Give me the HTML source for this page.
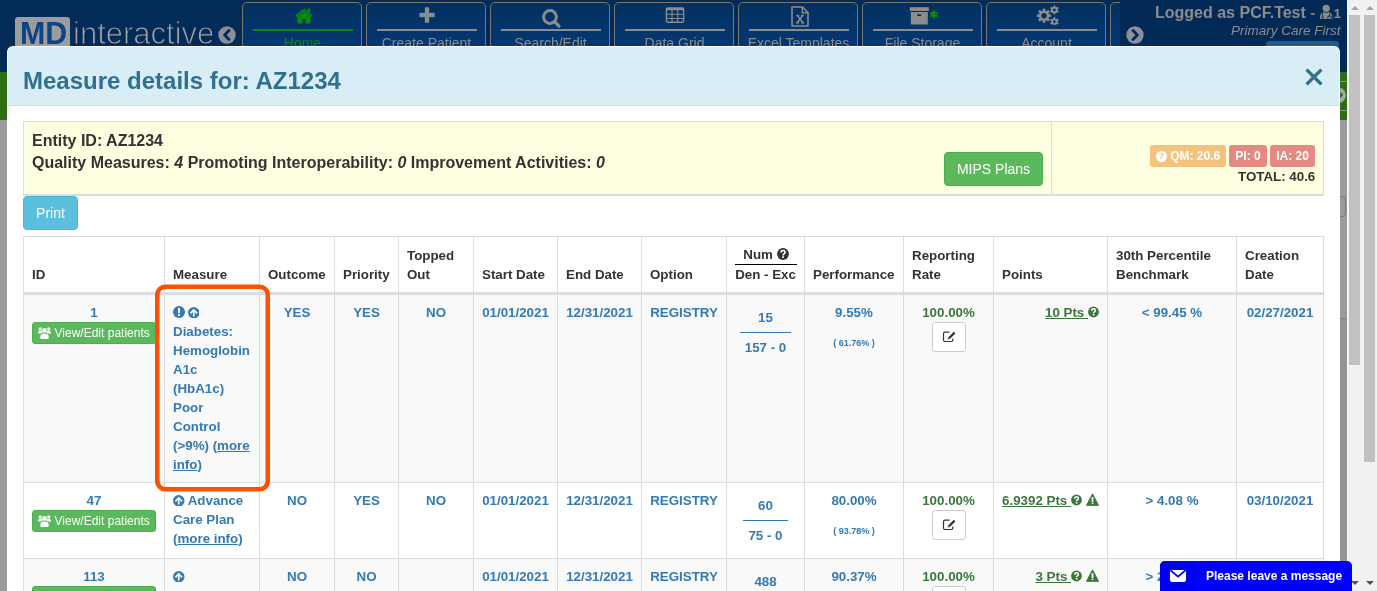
<!DOCTYPE html>
<html><head><meta charset="utf-8">
<style>
*{box-sizing:border-box;margin:0;padding:0}
html,body{width:1377px;height:591px;overflow:hidden;background:#999;font-family:"Liberation Sans",sans-serif;}
#wrap{position:absolute;left:0;top:0;width:1377px;height:591px;overflow:hidden;will-change:transform}
.abs{position:absolute}
#hdr{position:absolute;left:0;top:0;width:1347px;height:72px;background:#032b58}
#green{position:absolute;left:0;top:72px;width:1347px;height:48px;background:#2e6e12}
#gray{position:absolute;left:0;top:120px;width:1347px;height:471px;background:#9b9b9b}
.tab{position:absolute;top:2px;width:120px;height:60px;border:1px solid #7a7670;border-radius:5px;background:linear-gradient(#03305f,#053a7a)}
.tab .ln{position:absolute;left:10px;width:100px;top:26px;height:2px;background:#8c8c8c}
.tab .lb{position:absolute;left:1px;right:0;top:32px;text-align:center;font-size:14px;line-height:16px;color:#8c8c8c}
.tab .ic{position:absolute;left:0;right:0;top:4px;height:18px;text-align:center}
/* modal */
#modal{position:absolute;left:7px;top:46px;width:1333px;height:600px;background:#fff;border-radius:6px;overflow:hidden}
#mhead{position:absolute;left:1px;top:1px;width:1331px;height:59px;background:#d9edf7;border-bottom:1px solid #bce8f1;border-radius:5px 5px 0 0}
#mtitle{position:absolute;left:15px;top:20px;font-size:24px;font-weight:bold;color:#31708f;line-height:28px}
#close{position:absolute;left:1295.5px;top:19.5px}
#entity{position:absolute;left:16px;top:75px;width:1301px;height:75px;background:#fefee0;border:1px solid #ddd;border-bottom-width:2px}
#sb1,#sb2{position:absolute;top:0;width:15px;height:591px;background:#f1f1f1}
#sb1{left:1347px}#sb2{left:1362px}
.thumb{position:absolute;left:2px;width:11px;background:#c1c1c1}
.sbl{position:absolute;left:0;top:0;width:1px;height:591px;background:#fafafa}
.up{position:absolute;left:3.5px;top:6px;width:0;height:0;border-left:4px solid transparent;border-right:4px solid transparent;border-bottom:4px solid #a3a3a3}
.dn{position:absolute;left:3.5px;top:581px;width:0;height:0;border-left:4px solid transparent;border-right:4px solid transparent;border-top:4px solid #505050}
table{position:absolute;left:16px;top:190px;border-collapse:collapse;table-layout:fixed;font-size:13.33px;line-height:19px}
td,th{border:1px solid #ddd;padding:8px;vertical-align:top}
th{vertical-align:bottom;text-align:left;color:#333;border-bottom:3px solid #ddd}
td{color:#337ab7;font-weight:bold;text-align:center}
tr.st td{background:#f9f9f9}
.et{font-size:16px;font-weight:bold;color:#333;white-space:nowrap}
.btn-g{background:#5cb85c;border:1px solid #4cae4c;border-radius:4px;color:#fff;font-size:14px;line-height:32px;text-align:center}
.lbl{height:22px;border-radius:3px;color:#fff;font-size:12px;font-weight:bold;line-height:22px;text-align:center}
td.l{text-align:left}td.r{text-align:right}td.g{color:#3c763d}
.vbtn{display:block;margin:0;height:22px;background:#5cb85c;border:1px solid #4cae4c;border-radius:3px;color:#fff;font-weight:normal;font-size:12px;line-height:20px;white-space:nowrap;text-align:center}
.users{display:inline-block;width:13px;height:12px;vertical-align:-2px}
.nw{display:inline-block;margin-top:5px}
.num{border-bottom:1px solid #337ab7;padding:0 5px 5px}
.den{margin-top:5px;padding:0 5px}
.sm{font-size:9px;line-height:12px;margin-top:15px}
.eb{position:relative;width:34px;height:30px;margin:0 auto;border:1px solid #ccc;border-radius:3px;background:#fff}
.ci{display:inline-block;width:12px;height:12px;vertical-align:-1px}
.ca{width:11.5px;height:11.5px}
.qd,.qg{display:inline-block;width:12px;height:12px;vertical-align:-1px}
.qg{width:11px}
.wi{display:inline-block;width:13px;height:13px;margin-left:4px;vertical-align:-1px}
td.r{white-space:nowrap}
.warn{display:inline-block;width:0;height:0;border-left:7px solid transparent;border-right:7px solid transparent;border-bottom:13px solid #3c763d}
.q{display:inline-block;width:11px;height:11px;border-radius:50%;background:#fff;color:#f4c27c;font-size:9px;line-height:11px;vertical-align:1px}
</style></head><body><div id="wrap">
<div id="hdr"></div>
<div id="green"></div>
<div id="gray"></div>
<div class="abs" style="left:1340px;top:81px;width:7px;height:1px;background:#7f9f7f"></div>
<div class="abs" style="left:1340px;top:110px;width:7px;height:1px;background:#7f9f7f"></div>
<svg class="abs" style="left:1330px;top:87px" width="17" height="17" viewBox="0 0 17 17"><circle cx="8.2" cy="8.3" r="7.7" fill="#a6a6a6"/><path d="M7 3.5L11.4 7.9L7 12.3" stroke="#2e6e12" stroke-width="2.6" fill="none"/></svg>
<div class="abs" style="left:1340px;top:318px;width:7px;height:273px;background:#949494;border-top:1px solid #808080"></div>
<div class="abs" style="left:1336px;top:196px;width:10px;height:21px;border:1px solid #777;border-radius:4px;background:#9b9b9b"></div>

<!-- logo -->
<div class="abs" style="left:15px;top:17px;width:55px;height:35px;background:#9c9c9c;border-radius:3px"></div>
<div class="abs" style="left:19.5px;top:17px;font-size:32px;font-weight:bold;line-height:32px;color:#0b4587;transform:scaleX(0.95);transform-origin:0 0">MD</div>
<div class="abs" style="left:73px;top:18px;font-size:31px;line-height:31px;color:#a3a3a3;-webkit-text-stroke:1px #032b58">interactive</div>
<svg class="abs" style="left:218px;top:26px" width="18" height="18" viewBox="0 0 18 18"><circle cx="9" cy="9" r="8.7" fill="#8a9099"/><path d="M11 4.6L6.6 9L11 13.4" stroke="#032b58" stroke-width="2.8" fill="none" stroke-linecap="round" stroke-linejoin="round"/></svg>

<div class="tab" style="left:242px"><div class="ln" style="background:#0a8a0a"></div><div class="lb" style="color:#0a8a0a">Home</div>
 <svg class="abs" style="left:51.5px;top:5px" width="18" height="16" viewBox="0 0 18 16"><path d="M0.8 8.2L9 1.6L17.2 8.2" stroke="#0a8a0a" stroke-width="1.9" fill="none"/><path d="M12.6 0.6h2.4v5.2l-2.4-1.8z" fill="#0a8a0a"/><path d="M2.4 8.4L9 3.2L15.6 8.4V15.5H10.6V11H7.4V15.5H2.4Z" fill="#0a8a0a"/></svg></div>
<div class="tab" style="left:366px"><div class="ln"></div><div class="lb">Create Patient</div>
 <svg class="abs" style="left:52px;top:4px" width="16" height="16" viewBox="0 0 16 16"><path d="M6 0.5h4v5.5h5.5v4H10v5.5H6V10H0.5V6H6Z" fill="#8c8c8c" stroke="#8c8c8c" stroke-width="0.4" stroke-linejoin="round"/></svg></div>
<div class="tab" style="left:490px"><div class="ln"></div><div class="lb">Search/Edit</div>
 <svg class="abs" style="left:50px;top:4px" width="22" height="22" viewBox="0 0 22 22"><circle cx="9" cy="10" r="6.4" stroke="#8c8c8c" stroke-width="3" fill="none"/><path d="M13.2 14.4L18 19.2" stroke="#8c8c8c" stroke-width="3.2" stroke-linecap="round"/></svg></div>
<div class="tab" style="left:614px"><div class="ln"></div><div class="lb">Data Grid</div>
 <svg class="abs" style="left:50px;top:2px" width="20" height="18" viewBox="0 0 20 18"><rect x="1.4" y="3.3" width="17.2" height="14" rx="1.5" fill="none" stroke="#8c8c8c" stroke-width="1.4"/><rect x="0.8" y="2.6" width="18.4" height="2.6" rx="1.2" fill="#8c8c8c"/><path d="M7 4v13M12.8 4v13M1 9.3h18M1 13.5h18" stroke="#8c8c8c" stroke-width="1.1"/></svg></div>
<div class="tab" style="left:738px"><div class="ln"></div><div class="lb">Excel Templates</div>
 <svg class="abs" style="left:51.5px;top:2.5px" width="18" height="21" viewBox="0 0 18 21"><path d="M1 1H11.5L17 6.5V20H1Z" fill="none" stroke="#8c8c8c" stroke-width="1.6" stroke-linejoin="round"/><path d="M11.3 1.2V6.8H16.8" fill="none" stroke="#8c8c8c" stroke-width="1.5"/><path d="M6.2 9.3L12 16.8M11.9 9.3L6.2 16.8" stroke="#8c8c8c" stroke-width="1.5"/><path d="M4.9 9.2H8.2M9.9 9.2H13.2M4.9 16.9H8.2M9.9 16.9H13.2" stroke="#8c8c8c" stroke-width="1.1"/></svg></div>
<div class="tab" style="left:862px"><div class="ln"></div><div class="lb">File Storage</div>
 <svg class="abs" style="left:45px;top:1px" width="32" height="22" viewBox="0 0 32 22"><rect x="1.8" y="3.2" width="19" height="3.8" fill="#8c8c8c"/><rect x="2.8" y="8" width="17" height="12.5" fill="#8c8c8c"/><rect x="9" y="10.2" width="4.4" height="1.8" rx="0.8" fill="#03305f"/><g stroke="#0a8a0a" stroke-width="2.3" stroke-linecap="round"><path d="M26 7.4v6.2M23.3 8.9l5.4 3.1M23.3 12.1l5.4-3.1"/></g></svg></div>
<div class="tab" style="left:986px"><div class="ln"></div><div class="lb">Account</div>
 <svg class="abs" style="left:49px;top:0px" width="24" height="22" viewBox="0 0 24 22">
  <g fill="#8c8c8c"><circle cx="8" cy="12.7" r="5.2"/>
  <g transform="translate(8 12.7)"><rect x="-1.3" y="-7.1" width="2.6" height="14.2"/><rect x="-1.3" y="-7.1" width="2.6" height="14.2" transform="rotate(45)"/><rect x="-1.3" y="-7.1" width="2.6" height="14.2" transform="rotate(90)"/><rect x="-1.3" y="-7.1" width="2.6" height="14.2" transform="rotate(135)"/></g>
  <circle cx="18.4" cy="6.9" r="3.2"/><g transform="translate(18.4 6.9)"><rect x="-0.9" y="-4.5" width="1.8" height="9"/><rect x="-0.9" y="-4.5" width="1.8" height="9" transform="rotate(60)"/><rect x="-0.9" y="-4.5" width="1.8" height="9" transform="rotate(120)"/></g>
  <circle cx="18.4" cy="18.6" r="3.2"/><g transform="translate(18.4 18.6)"><rect x="-0.9" y="-4.5" width="1.8" height="9"/><rect x="-0.9" y="-4.5" width="1.8" height="9" transform="rotate(60)"/><rect x="-0.9" y="-4.5" width="1.8" height="9" transform="rotate(120)"/></g></g>
  <circle cx="8" cy="12.7" r="2.7" fill="#03305f"/><circle cx="18.4" cy="6.9" r="1.3" fill="#03305f"/><circle cx="18.4" cy="18.6" r="1.3" fill="#03305f"/></svg></div>
<div class="tab" style="left:1110px"></div>
<div class="abs" style="left:1120px;top:0;width:227px;height:46px;background:#032a57"></div>
<svg class="abs" style="left:1126px;top:26px" width="18" height="18" viewBox="0 0 18 18"><circle cx="9" cy="9" r="8.7" fill="#8a9099"/><path d="M7 4.6L11.4 9L7 13.4" stroke="#032a57" stroke-width="2.8" fill="none" stroke-linecap="round" stroke-linejoin="round"/></svg>
<div class="abs" style="left:1155px;top:3px;font-size:16px;font-weight:bold;line-height:20px;color:#8c8c8c;white-space:nowrap">Logged as PCF.Test <span style="color:#7d7468">-</span></div>
<svg class="abs" style="left:1319px;top:4px" width="15" height="16" viewBox="0 0 15 16"><circle cx="7.2" cy="4.3" r="3.6" fill="#8c8c8c"/><path d="M0.9 14.9C0.7 11.4 2.2 8.7 4.6 8.1L7.2 9.1L9.8 8.1C12.2 8.7 13.7 11.4 13.5 14.9Z" fill="#8c8c8c"/><path d="M3.6 8.6V12.4" stroke="#032a57" stroke-width="0.9"/><circle cx="3.6" cy="13.5" r="1.1" stroke="#032a57" stroke-width="0.8" fill="none"/><path d="M10.6 8.6V12.2M8.9 15V12.2H12.3V15" stroke="#032a57" stroke-width="0.9" fill="none"/></svg>
<div class="abs" style="left:1333.5px;top:3.5px;font-size:13.5px;font-weight:bold;line-height:20px;color:#8c8c8c">1</div>
<div class="abs" style="left:1231px;top:23px;font-size:13.5px;font-style:italic;line-height:16px;color:#8c8c8c;white-space:nowrap">Primary Care First</div>
<div class="abs" style="left:1266px;top:41px;width:73px;height:10px;background:#1f5d8e;border-radius:4px 4px 0 0"></div>

<div id="modal">
  <div id="mhead"><div id="mtitle">Measure details for: AZ1234</div><svg id="close" width="20" height="20" viewBox="0 0 20 20"><path d="M2.6 2.6L17.4 17.4M17.4 2.6L2.6 17.4" stroke="#31708f" stroke-width="3.4"/></svg></div>
  <div id="entity">
    <div class="abs" style="left:1027px;top:0;width:1px;height:72px;background:#ddd"></div>
    <div class="abs et" style="left:8px;top:10px">Entity ID: AZ1234</div>
    <div class="abs et" style="left:8px;top:32px">Quality Measures: <i>4</i> Promoting Interoperability: <i>0</i> Improvement Activities: <i>0</i></div>
    <div class="abs btn-g" style="left:920px;top:30px;width:99px;height:34px">MIPS Plans</div>
    <div class="abs lbl" style="left:1126px;top:23px;width:76px;background:#f4c27c"><span class="q">?</span> QM: 20.6</div>
    <div class="abs lbl" style="left:1205px;top:23px;width:38px;background:#e58a82">PI: 0</div>
    <div class="abs lbl" style="left:1246px;top:23px;width:45px;background:#e58a82">IA: 20</div>
    <div class="abs" style="left:1214px;top:47px;font-size:13.33px;font-weight:bold;color:#333">TOTAL: 40.6</div>
  </div>
  <div class="abs" style="left:16px;top:150px;width:55px;height:34px;background:#5bc0de;border:1px solid #46b8da;border-radius:4px;color:#fff;font-size:14px;line-height:32px;text-align:center">Print</div>
  <table>
    <colgroup><col style="width:141px"><col style="width:95px"><col style="width:75px"><col style="width:64px"><col style="width:75px"><col style="width:84px"><col style="width:84px"><col style="width:85px"><col style="width:78px"><col style="width:99px"><col style="width:90px"><col style="width:114px"><col style="width:129px"><col style="width:87px"></colgroup>
    <tr class="hd" style="height:57px"><th>ID</th><th>Measure</th><th>Outcome</th><th>Priority</th><th>Topped Out</th><th>Start Date</th><th>End Date</th><th>Option</th><th style="text-align:center"><div style="border-bottom:1px solid #000;margin:0 -0.5px;padding-left:1px">Num <svg class="qd" viewBox="0 0 12 12"><circle cx="6" cy="6" r="5.9" fill="#333"/><path d="M4.1 4.6Q4.1 2.5 6.1 2.5Q8 2.5 8 4.3Q8 5.3 6.9 5.9Q6.1 6.3 6.1 7.4" stroke="#fff" stroke-width="1.7" fill="none"/><rect x="5.2" y="8.3" width="1.8" height="1.6" fill="#fff"/></svg></div>Den - Exc</th><th>Performance</th><th>Reporting Rate</th><th>Points</th><th>30th Percentile Benchmark</th><th>Creation Date</th></tr>
    <tr class="st" style="height:189px">
      <td>1<div class="vbtn"><svg class="users" viewBox="0 0 13 12"><g fill="#fff"><circle cx="2.3" cy="1.9" r="1.6"/><circle cx="10.7" cy="1.9" r="1.6"/><path d="M0 5.6C0 4.3 1 3.7 2.3 3.7S4.6 4.3 4.6 5.6L3.5 6.4H0Z"/><path d="M13 5.6C13 4.3 12 3.7 10.7 3.7S8.4 4.3 8.4 5.6L9.5 6.4H13Z"/><circle cx="6.5" cy="3.4" r="2.3"/><path d="M2.2 10.5C2.2 7.7 3.8 6.6 6.5 6.6S10.8 7.7 10.8 10.5C10.8 11.4 10.2 12 9.4 12H3.6C2.8 12 2.2 11.4 2.2 10.5Z"/></g></svg> View/Edit patients</div></td>
      <td class="l"><svg class="ci" viewBox="0 0 12 12"><circle cx="6" cy="6" r="6" fill="#337ab7"/><rect x="5" y="2" width="2" height="5.2" fill="#fff"/><rect x="5" y="8.2" width="2" height="1.8" fill="#fff"/></svg><span style="margin-left:2.5px"></span><svg class="ci ca" viewBox="0 0 12 12"><circle cx="6" cy="6" r="6" fill="#337ab7"/><path d="M2.5 6.6L6 3.1L9.5 6.6" stroke="#fff" stroke-width="1.7" fill="none"/><rect x="5.15" y="3.6" width="1.7" height="6.3" fill="#fff"/></svg><br>Diabetes: Hemoglobin A1c (HbA1c) Poor Control (&gt;9%) (<u>more info</u>)</td>
      <td>YES</td><td>YES</td><td>NO</td>
      <td>01/01/2021</td><td>12/31/2021</td><td>REGISTRY</td>
      <td><div class="nw"><div class="num">15</div><div class="den">157 - 0</div></div></td>
      <td>9.55%<div class="sm">( 61.76% )</div></td>
      <td class="g">100.00%<div class="eb"><svg width="14" height="12" viewBox="0 0 14 12" style="position:absolute;left:9.5px;top:7.5px"><path d="M7.5 1.2H3C2 1.2 1.5 1.7 1.5 2.7V9C1.5 10 2 10.5 3 10.5H9.3C10.3 10.5 10.8 10 10.8 9V7.6" stroke="#333" stroke-width="1.2" fill="none"/><path d="M5.6 8.4L6.2 6.4L11.8 0.8L13.4 2.4L7.8 8Z" fill="#333"/><path d="M6.4 6.6L7.6 7.8" stroke="#fff" stroke-width="0.6"/></svg></div></td>
      <td class="g r"><u>10 Pts </u><svg class="qg" viewBox="0 0 12 12"><circle cx="6" cy="6" r="5.9" fill="#3c763d"/><path d="M4.1 4.6Q4.1 2.5 6.1 2.5Q8 2.5 8 4.3Q8 5.3 6.9 5.9Q6.1 6.3 6.1 7.4" stroke="#fff" stroke-width="1.7" fill="none"/><rect x="5.2" y="8.3" width="1.8" height="1.6" fill="#fff"/></svg></td>
      <td>&lt; 99.45 %</td>
      <td>02/27/2021</td>
    </tr>
    <tr style="height:76px">
      <td>47<div class="vbtn"><svg class="users" viewBox="0 0 13 12"><g fill="#fff"><circle cx="2.3" cy="1.9" r="1.6"/><circle cx="10.7" cy="1.9" r="1.6"/><path d="M0 5.6C0 4.3 1 3.7 2.3 3.7S4.6 4.3 4.6 5.6L3.5 6.4H0Z"/><path d="M13 5.6C13 4.3 12 3.7 10.7 3.7S8.4 4.3 8.4 5.6L9.5 6.4H13Z"/><circle cx="6.5" cy="3.4" r="2.3"/><path d="M2.2 10.5C2.2 7.7 3.8 6.6 6.5 6.6S10.8 7.7 10.8 10.5C10.8 11.4 10.2 12 9.4 12H3.6C2.8 12 2.2 11.4 2.2 10.5Z"/></g></svg> View/Edit patients</div></td>
      <td class="l"><svg class="ci ca" viewBox="0 0 12 12"><circle cx="6" cy="6" r="6" fill="#337ab7"/><path d="M2.5 6.6L6 3.1L9.5 6.6" stroke="#fff" stroke-width="1.7" fill="none"/><rect x="5.15" y="3.6" width="1.7" height="6.3" fill="#fff"/></svg> Advance Care Plan (<u>more info</u>)</td>
      <td>NO</td><td>YES</td><td>NO</td>
      <td>01/01/2021</td><td>12/31/2021</td><td>REGISTRY</td>
      <td><div class="nw"><div class="num">60</div><div class="den">75 - 0</div></div></td>
      <td>80.00%<div class="sm">( 93.78% )</div></td>
      <td class="g">100.00%<div class="eb"><svg width="14" height="12" viewBox="0 0 14 12" style="position:absolute;left:9.5px;top:7.5px"><path d="M7.5 1.2H3C2 1.2 1.5 1.7 1.5 2.7V9C1.5 10 2 10.5 3 10.5H9.3C10.3 10.5 10.8 10 10.8 9V7.6" stroke="#333" stroke-width="1.2" fill="none"/><path d="M5.6 8.4L6.2 6.4L11.8 0.8L13.4 2.4L7.8 8Z" fill="#333"/><path d="M6.4 6.6L7.6 7.8" stroke="#fff" stroke-width="0.6"/></svg></div></td>
      <td class="g r"><u>6.9392 Pts </u><svg class="qg" viewBox="0 0 12 12"><circle cx="6" cy="6" r="5.9" fill="#3c763d"/><path d="M4.1 4.6Q4.1 2.5 6.1 2.5Q8 2.5 8 4.3Q8 5.3 6.9 5.9Q6.1 6.3 6.1 7.4" stroke="#fff" stroke-width="1.7" fill="none"/><rect x="5.2" y="8.3" width="1.8" height="1.6" fill="#fff"/></svg><svg class="wi" viewBox="0 0 13 13"><path d="M6.5 0.9L12.5 12.3H0.5Z" fill="#3c763d" stroke="#3c763d" stroke-width="1" stroke-linejoin="round"/><rect x="5.6" y="4.2" width="1.8" height="4.8" fill="#fff"/><rect x="5.6" y="9.7" width="1.8" height="1.3" fill="#fff"/></svg></td>
      <td>&gt; 4.08 %</td>
      <td>03/10/2021</td>
    </tr>
    <tr class="st" style="height:76px">
      <td>113<div class="vbtn"><svg class="users" viewBox="0 0 13 12"><g fill="#fff"><circle cx="2.3" cy="1.9" r="1.6"/><circle cx="10.7" cy="1.9" r="1.6"/><path d="M0 5.6C0 4.3 1 3.7 2.3 3.7S4.6 4.3 4.6 5.6L3.5 6.4H0Z"/><path d="M13 5.6C13 4.3 12 3.7 10.7 3.7S8.4 4.3 8.4 5.6L9.5 6.4H13Z"/><circle cx="6.5" cy="3.4" r="2.3"/><path d="M2.2 10.5C2.2 7.7 3.8 6.6 6.5 6.6S10.8 7.7 10.8 10.5C10.8 11.4 10.2 12 9.4 12H3.6C2.8 12 2.2 11.4 2.2 10.5Z"/></g></svg> View/Edit patients</div></td>
      <td class="l"><svg class="ci ca" viewBox="0 0 12 12"><circle cx="6" cy="6" r="6" fill="#337ab7"/><path d="M2.5 6.6L6 3.1L9.5 6.6" stroke="#fff" stroke-width="1.7" fill="none"/><rect x="5.15" y="3.6" width="1.7" height="6.3" fill="#fff"/></svg></td>
      <td>NO</td><td>NO</td><td></td>
      <td>01/01/2021</td><td>12/31/2021</td><td>REGISTRY</td>
      <td><div class="nw"><div class="num">488</div><div class="den">500 - 0</div></div></td>
      <td>90.37%</td>
      <td class="g">100.00%<div class="eb"><svg width="14" height="12" viewBox="0 0 14 12" style="position:absolute;left:9.5px;top:7.5px"><path d="M7.5 1.2H3C2 1.2 1.5 1.7 1.5 2.7V9C1.5 10 2 10.5 3 10.5H9.3C10.3 10.5 10.8 10 10.8 9V7.6" stroke="#333" stroke-width="1.2" fill="none"/><path d="M5.6 8.4L6.2 6.4L11.8 0.8L13.4 2.4L7.8 8Z" fill="#333"/><path d="M6.4 6.6L7.6 7.8" stroke="#fff" stroke-width="0.6"/></svg></div></td>
      <td class="g r"><u>3 Pts </u><svg class="qg" viewBox="0 0 12 12"><circle cx="6" cy="6" r="5.9" fill="#3c763d"/><path d="M4.1 4.6Q4.1 2.5 6.1 2.5Q8 2.5 8 4.3Q8 5.3 6.9 5.9Q6.1 6.3 6.1 7.4" stroke="#fff" stroke-width="1.7" fill="none"/><rect x="5.2" y="8.3" width="1.8" height="1.6" fill="#fff"/></svg><svg class="wi" viewBox="0 0 13 13"><path d="M6.5 0.9L12.5 12.3H0.5Z" fill="#3c763d" stroke="#3c763d" stroke-width="1" stroke-linejoin="round"/><rect x="5.6" y="4.2" width="1.8" height="4.8" fill="#fff"/><rect x="5.6" y="9.7" width="1.8" height="1.3" fill="#fff"/></svg></td>
      <td>&gt; 2.08 %</td>
      <td class="l"></td>
    </tr>
  </table>
</div>

<div id="sb1"><div class="sbl"></div><div class="thumb" style="top:15px;height:350px"></div><div class="up"></div><div class="dn"></div></div>
<div id="sb2"><div class="thumb" style="top:15px;height:447px"></div><div class="up"></div><div class="dn"></div></div>
<svg class="abs" style="left:150px;top:280px" width="125" height="216" viewBox="0 0 125 216"><rect x="7.25" y="6.75" width="110.5" height="202.5" rx="8" fill="none" stroke="#ff5000" stroke-width="4.5"/></svg>
<div class="abs" style="left:1160px;top:561px;width:192px;height:40px;background:#0000ff;border-radius:5px 5px 0 0;overflow:hidden">
  <div class="abs" style="left:0;top:0;width:36px;height:40px;background:#0000f0"></div>
  <svg class="abs" style="left:10px;top:9px" width="16" height="12" viewBox="0 0 16 12"><path d="M0 2.2C0 1 .9 0 2 0H14C15.1 0 16 1 16 2.2V9.8C16 11 15.1 12 14 12H2C.9 12 0 11 0 9.8Z" fill="#fff"/><path d="M.8 .6L8 6.6L15.2 .6" stroke="#0000f0" stroke-width="1.8" fill="none"/></svg>
  <div class="abs" style="left:46px;top:7px;font-size:12px;font-weight:bold;line-height:16px;color:#fff;white-space:nowrap">Please leave a message</div>
</div>
</div></body></html>
